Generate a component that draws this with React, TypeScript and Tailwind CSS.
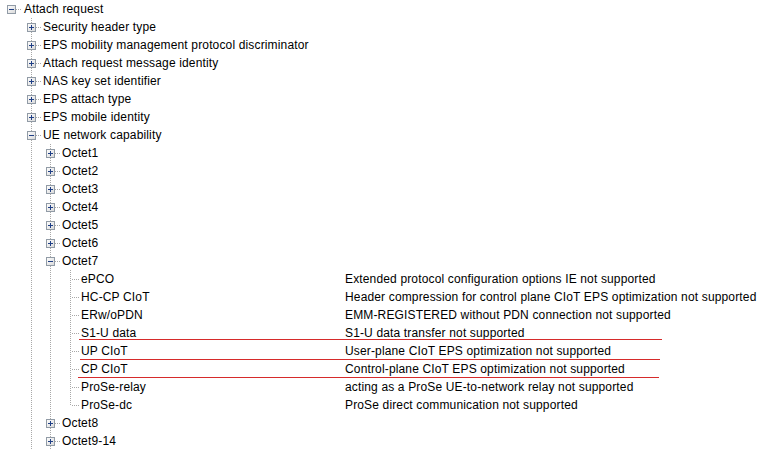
import React from 'react';

type Row = {
  label: string;
  level: number;
  box?: 'plus' | 'minus';
  desc?: string;
  last?: boolean;
  rails: boolean[];
  mark?: 'a' | 'b' | 'c';
};

// x of the connector column for each depth, and where the label starts
const CENTERS = [11, 31, 50, 70];
const TEXT_X = [24, 43, 62, 81];

const L1 = [false];
const L2 = [false, true];
const L3 = [false, true, true];

const rows: Row[] = [
  { label: 'Attach request', level: 0, box: 'minus', rails: [] },
  { label: 'Security header type', level: 1, box: 'plus', rails: L1 },
  { label: 'EPS mobility management protocol discriminator', level: 1, box: 'plus', rails: L1 },
  { label: 'Attach request message identity', level: 1, box: 'plus', rails: L1 },
  { label: 'NAS key set identifier', level: 1, box: 'plus', rails: L1 },
  { label: 'EPS attach type', level: 1, box: 'plus', rails: L1 },
  { label: 'EPS mobile identity', level: 1, box: 'plus', rails: L1 },
  { label: 'UE network capability', level: 1, box: 'minus', rails: L1 },
  { label: 'Octet1', level: 2, box: 'plus', rails: L2 },
  { label: 'Octet2', level: 2, box: 'plus', rails: L2 },
  { label: 'Octet3', level: 2, box: 'plus', rails: L2 },
  { label: 'Octet4', level: 2, box: 'plus', rails: L2 },
  { label: 'Octet5', level: 2, box: 'plus', rails: L2 },
  { label: 'Octet6', level: 2, box: 'plus', rails: L2 },
  { label: 'Octet7', level: 2, box: 'minus', rails: L2 },
  { label: 'ePCO', level: 3, rails: L3, desc: 'Extended protocol configuration options IE not supported' },
  { label: 'HC-CP CIoT', level: 3, rails: L3, desc: 'Header compression for control plane CIoT EPS optimization not supported' },
  { label: 'ERw/oPDN', level: 3, rails: L3, desc: 'EMM-REGISTERED without PDN connection not supported' },
  { label: 'S1-U data', level: 3, rails: L3, desc: 'S1-U data transfer not supported', mark: 'a' },
  { label: 'UP CIoT', level: 3, rails: L3, desc: 'User-plane CIoT EPS optimization not supported', mark: 'b' },
  { label: 'CP CIoT', level: 3, rails: L3, desc: 'Control-plane CIoT EPS optimization not supported', mark: 'c' },
  { label: 'ProSe-relay', level: 3, rails: L3, desc: 'acting as a ProSe UE-to-network relay not supported' },
  { label: 'ProSe-dc', level: 3, rails: L3, desc: 'ProSe direct communication not supported', last: true },
  { label: 'Octet8', level: 2, box: 'plus', rails: L2 },
  { label: 'Octet9-14', level: 2, box: 'plus', rails: L2 },
];

const DOT = '#a8a8a8';

function VLine({ x, y1, y2 }: { x: number; y1: number; y2: number }) {
  return <line x1={x + 0.5} x2={x + 0.5} y1={y1} y2={y2} stroke={DOT} strokeDasharray="1 1" />;
}

function Gutter({ row }: { row: Row }) {
  const w = TEXT_X[row.level];
  const c = CENTERS[row.level];
  return (
    <svg width={w} height={18} className="shrink-0 block" shapeRendering="crispEdges">
      <defs>
        <linearGradient id="boxfill" x1="0" y1="0" x2="1" y2="1">
          <stop offset="0" stopColor="#ffffff" />
          <stop offset="1" stopColor="#d8d8d8" />
        </linearGradient>
      </defs>
      {row.rails.map((on, i) => (on ? <VLine key={i} x={CENTERS[i]} y1={0} y2={18} /> : null))}
      {row.level > 0 && <VLine x={c} y1={0} y2={row.last ? 10 : 18} />}
      <line
        x1={row.box ? c + 5 : c + 2}
        x2={w - 2}
        y1={9.5}
        y2={9.5}
        stroke={DOT}
        strokeDasharray="1 1"
      />
      {row.box && (
        <g>
          <rect x={c - 4 + 0.5} y={5.5} width={8} height={8} fill="url(#boxfill)" stroke="#919ba6" />
          <line x1={c - 2} x2={c + 3} y1={9.5} y2={9.5} stroke="#1f3f86" />
          {row.box === 'plus' && <line x1={c + 0.5} x2={c + 0.5} y1={7} y2={12} stroke="#1f3f86" />}
        </g>
      )}
    </svg>
  );
}

function Mark({ kind }: { kind: 'a' | 'b' | 'c' }) {
  if (kind === 'a') return <div className="absolute left-[79px] top-[15px] w-[583px] h-px bg-[#d62b2b]" />;
  if (kind === 'b') return <div className="absolute left-[80px] top-[17px] w-[580px] h-px bg-[#d62b2b]" />;
  return <div className="absolute left-[78px] top-[17px] w-[581px] h-px bg-[#d62b2b]" />;
}

export default function App() {
  return (
    <div className="w-[763px] h-[450px] overflow-hidden bg-white text-black font-['Liberation_Sans',Arial,sans-serif] text-[12px] leading-[18px] tracking-[0.15px]">
      {rows.map((row, i) => (
        <div key={i} className="relative flex h-[18px] whitespace-nowrap">
          <div className="flex w-[345px] shrink-0">
            <Gutter row={row} />
            <span>{row.label}</span>
          </div>
          {row.desc && <span>{row.desc}</span>}
          {row.mark && <Mark kind={row.mark} />}
        </div>
      ))}
    </div>
  );
}
